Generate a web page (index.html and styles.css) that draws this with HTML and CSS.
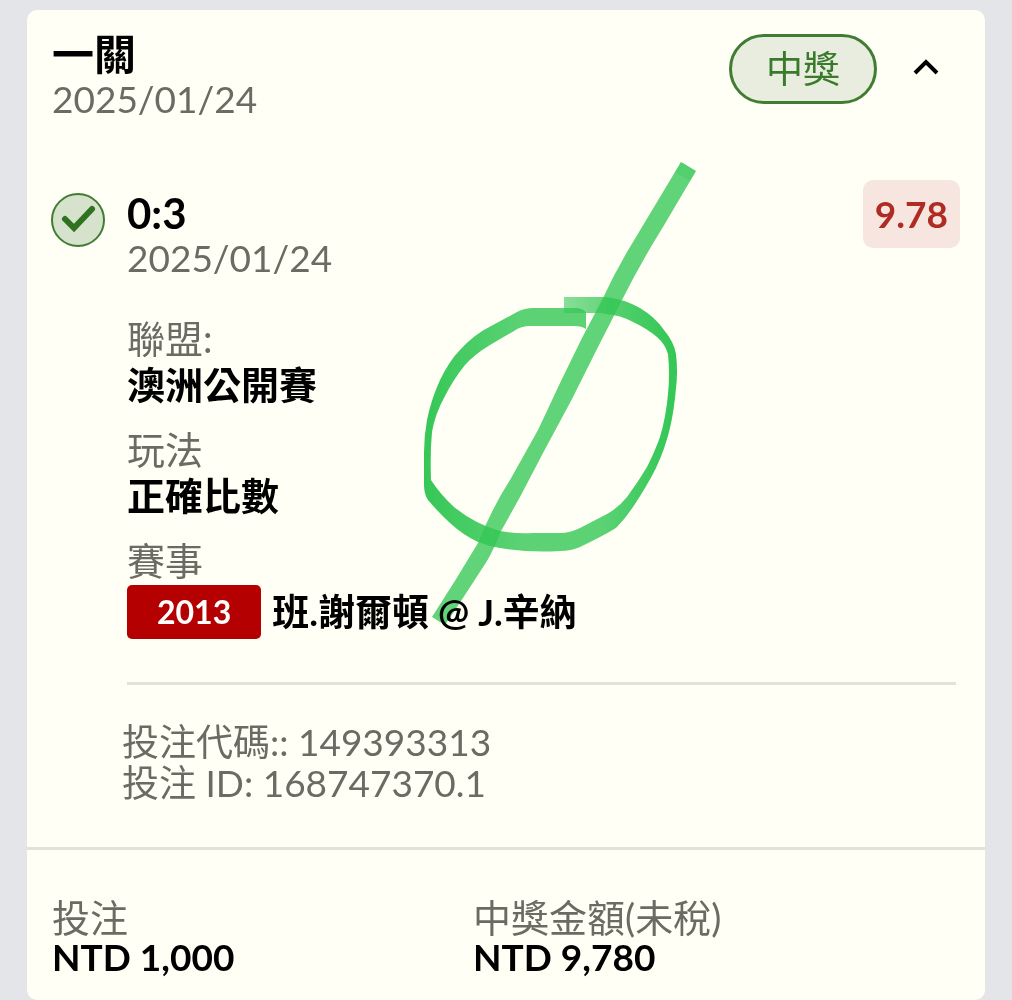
FILE: index.html
```html
<!DOCTYPE html>
<html lang="zh-Hant">
<head>
  <meta charset="UTF-8" />
  <meta name="viewport" content="width=device-width, initial-scale=1" />
  <title>投注紀錄</title>
  <link rel="stylesheet" href="styles.css">
</head>
<body>

<article class="ticket">
  <header class="ticket-header">
    <div>
      <h1>一關</h1>
      <p class="muted">2025/01/24</p>
    </div>
    <div class="ticket-status">
      <span class="status-pill">中獎</span>
      <button type="button" class="toggle-btn" aria-label="收合" aria-expanded="true">
        <svg width="28" height="20" viewBox="0 0 28 20"><path d="M3 15 L14 4 L25 15" fill="none" stroke="#000" stroke-width="4"/></svg>
      </button>
    </div>
  </header>

  <section class="selection">
    <svg class="won-icon" width="54" height="54" viewBox="0 0 54 54">
      <circle cx="27" cy="27" r="26" fill="#d7e2cd" stroke="#417c33" stroke-width="2"/>
      <path d="M14 26 L23 35 L41 16" fill="none" stroke="#2f7320" stroke-width="6" stroke-linecap="round"/>
    </svg>
    <div class="selection-body">
      <div class="selection-top">
        <div>
          <h2>0:3</h2>
          <p class="muted">2025/01/24</p>
        </div>
        <span class="odds">9.78</span>
      </div>
      <dl class="details">
        <dt>聯盟:</dt>
        <dd>澳洲公開賽</dd>
        <dt>玩法</dt>
        <dd>正確比數</dd>
        <dt>賽事</dt>
        <dd class="match"><span class="match-code">2013</span><span>班.謝爾頓 @ J.辛納</span></dd>
      </dl>
    </div>
  </section>

  <div class="bet-ids muted">
    <p>投注代碼:: 149393313</p>
    <p>投注 ID: 168747370.1</p>
  </div>

  <dl class="totals">
    <div>
      <dt>投注</dt>
      <dd>NTD 1,000</dd>
    </div>
    <div>
      <dt>中獎金額(未稅)</dt>
      <dd>NTD 9,780</dd>
    </div>
  </dl>

  <!-- Hand-drawn marker -->
  <svg class="marker" width="290" height="480" viewBox="418 155 290 480" aria-hidden="true">
    <defs>
      <linearGradient id="ink" gradientUnits="userSpaceOnUse" x1="424" y1="0" x2="677" y2="0">
        <stop offset="0" stop-color="#34c759"/>
        <stop offset="0.1" stop-color="#34c759" stop-opacity="0.94"/>
        <stop offset="0.4" stop-color="#34c759" stop-opacity="0.8"/>
        <stop offset="0.7" stop-color="#34c759" stop-opacity="0.8"/>
        <stop offset="0.9" stop-color="#34c759" stop-opacity="0.95"/>
        <stop offset="1" stop-color="#34c759"/>
      </linearGradient>
      <linearGradient id="start" gradientUnits="userSpaceOnUse" x1="564" y1="0" x2="606" y2="0">
        <stop offset="0" stop-color="#34c759" stop-opacity="0.58"/>
        <stop offset="1" stop-color="#34c759" stop-opacity="0.76"/>
      </linearGradient>
    </defs>
    <path fill="url(#start)" d="M564 297 H606 V314 L600 313 H564 Z"/>
    <path fill="url(#ink)" d="M606 297 Q624 299 640 308 Q655 317 664 330 Q674 342 676 354 Q678 372 676 388 Q674 411 670 428 Q665 449 656 468 Q647 486 633 507 Q625 519 617 527 Q609 533 580 547 Q571 551 560 551 Q530 553 500 548 Q488 546 478 542 Q463 535 450 523 Q439 513 428 500 Q424 494 424 485 V453 Q424 436 427 420 Q431 400 440 380 Q450 360 459 351 Q474 334 493 325 L517 312 Q524 308 534 308 H577 Q585 309 586 313 V329 Q582 326 574 326 H530 Q521 326 514 331 L490 345 Q475 354 465 365 Q453 380 445 396 Q435 414 432 432 Q430 453 431 480 Q440 494 454 507 Q475 524 500 531 Q516 534 533 533 H560 Q570 533 580 528 L607 514 Q618 508 627 497 Q638 482 647 467 Q655 451 660 437 Q666 417 668 394 Q670 374 668 354 Q665 344 657 337 Q646 328 633 322 Q620 315 606 314 Z"/>
    <path fill="#34c759" fill-opacity="0.78" d="M681 162 L696 171 L663 227 Q640 264 622 300 L598 347 L572 399 L543 453 L520 497 L500 533 Q494 549 487 561 L461 601 L445 625 L432 617 Q456 580 478 543 Q492 508 510 480 L538 430 L561 381 L582 338 L602 300 Q615 272 630 247 L660 197 Z"/>
    <path fill="#34c759" fill-opacity="0.3" d="M681 162 L696 171 L690 181 L675 172 Z"/>
  </svg>
</article>

</body>
</html>
```

FILE: styles.css
```css
* {
  box-sizing: border-box;
}
body {
  font-family: Lato, "Noto Sans CJK TC", sans-serif;
  font-size: 37px;
  line-height: 40px;
  color: #000;
  background: #e4e5e8;
  margin: 0;
  padding: 10px 27px 0;
}
h1, h2, p, dl, dd {
  margin: 0;
}
h1, h2 {
  font-size: 42px;
  line-height: 40px;
  font-weight: bold;
  margin-bottom: 5px;
}
dd {
  font-weight: bold;
}
dt, .muted {
  color: #6b6b63;
}
dt {
  font-size: 38px;
}
.ticket {
  position: relative;
  background: #fffff5;
  border-radius: 10px;
}
.ticket-header {
  display: flex;
  justify-content: space-between;
  align-items: flex-start;
  padding: 24px 39px 0 25px;
}
.ticket-status {
  display: flex;
  align-items: center;
  gap: 29px;
}
.status-pill {
  padding: 12px 34px;
  border: 3px solid #417c33;
  border-radius: 35px;
  background: #e8eddf;
  color: #397a2b;
}
.toggle-btn {
  width: 40px;
  height: 40px;
  padding: 0;
  border: none;
  background: none;
  cursor: pointer;
}
.selection {
  display: flex;
  align-items: flex-start;
  gap: 22px;
  padding: 61px 25px 0 24px;
}
.won-icon {
  flex: none;
  margin-top: 13px;
}
.selection-body {
  flex: 1;
  margin-right: 4px;
  padding-bottom: 43px;
  border-bottom: 3px solid #e2e2da;
}
.selection-top {
  display: flex;
  justify-content: space-between;
  align-items: flex-start;
  margin-right: -4px;
}
.selection-top h2 {
  margin-top: 13px;
}
.odds {
  padding: 14px 12px;
  border-radius: 10px;
  background: #f6e6df;
  color: #af2c24;
  font-weight: bold;
}
.details {
  margin-top: 37px;
}
.details dt {
  line-height: 46px;
}
.details dd {
  font-size: 38px;
  line-height: 46px;
  margin-bottom: 19px;
}
.details .match {
  display: flex;
  align-items: center;
  gap: 11px;
  font-size: 37px;
  line-height: 54px;
  margin-top: 2px;
  margin-bottom: 0;
}
.match-code {
  padding: 0 30px;
  border-radius: 5px;
  background: #b40000;
  color: #fff;
  font-size: 32px;
}
.bet-ids {
  line-height: 41px;
  padding: 36px 25px 44px 95px;
}
.totals {
  display: grid;
  grid-template-columns: 421px 1fr;
  padding: 47px 25px 23px;
  border-top: 3px solid #e2e2da;
}
.marker {
  position: absolute;
  left: 391px;
  top: 145px;
  pointer-events: none;
  mix-blend-mode: multiply;
}
```
